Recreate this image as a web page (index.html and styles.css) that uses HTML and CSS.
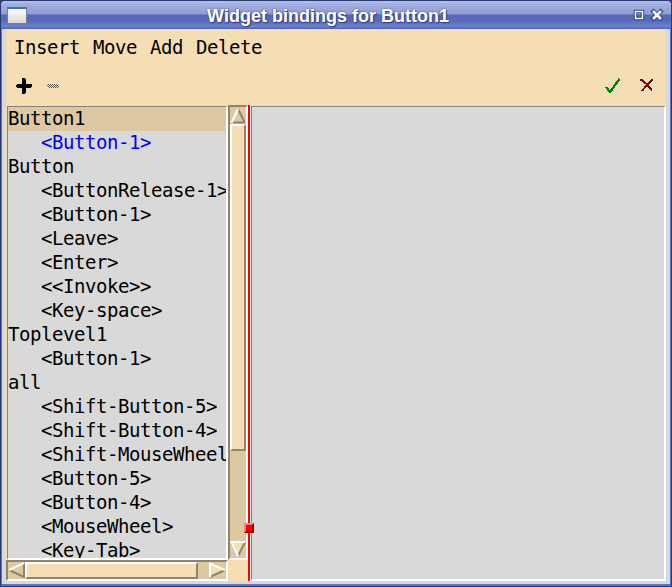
FILE: index.html
```
<!DOCTYPE html>
<html lang="en">
<head>
<meta charset="utf-8">
<title>Widget bindings for Button1</title>
<link rel="stylesheet" href="styles.css">
</head>
<body>
<div class="window">
  <header class="titlebar">
    <span class="app-icon"></span>
    <h1>Widget bindings for Button1</h1>
    <svg class="controls" width="32" height="16" viewBox="0 0 32 16">
      <rect x="3.500" y="3.500" width="7" height="7" fill="none" stroke="#35437f" stroke-width="3.4"/>
      <rect x="3.500" y="3.500" width="7" height="7" fill="none" stroke="#fff" stroke-width="1.4"/>
      <path d="M20 2l10 10M30 2l-10 10" stroke="#35437f" stroke-width="4.5"/>
      <path d="M21 3l8 8M29 3l-8 8" stroke="#fff" stroke-width="2.5"/>
    </svg>
  </header>
  <div class="content">
    <nav class="menu"><span>Insert</span><span>Move</span><span>Add</span><span>Delete</span></nav>
    <div class="toolbar">
      <svg width="16" height="16" viewBox="0 0 16 16" shape-rendering="crispEdges"><path d="M6 0h3v1h1v5h6v3h-1v1h-5v5h-1v1h-3v-6h-5v-1h-1v-2h1v-1h5z" fill="#000"/></svg>
      <svg class="minus" width="12" height="4" viewBox="0 0 12 4" shape-rendering="crispEdges"><path stroke="#555" stroke-dasharray="1 1" d="M1 .5h10M0 1.5h12M1 2.5h11M2 3.5h9"/></svg>
      <span class="spacer"></span>
      <svg class="check" width="16" height="16" viewBox="0 0 16 16" shape-rendering="crispEdges"><path d="M1 9l4 5L14.500 1" fill="none" stroke="#008000" stroke-width="2.300"/></svg>
      <svg class="cross" width="14" height="13" viewBox="0 0 14 13" shape-rendering="crispEdges"><path d="M2 1l11 11M14 1L3 12" stroke="#fff" stroke-width="1.500"/><path d="M0 1h2l5 4.500 5 6M12.500 .5L7 6l-5 6" fill="none" stroke="#800000" stroke-width="1.900"/></svg>
    </div>
    <main class="panes">
      <section class="left">
        <ul class="list">
          <li class="selected">Button1</li>
          <li class="event own">&lt;Button-1&gt;</li>
          <li>Button</li>
          <li class="event">&lt;ButtonRelease-1&gt;</li>
          <li class="event">&lt;Button-1&gt;</li>
          <li class="event">&lt;Leave&gt;</li>
          <li class="event">&lt;Enter&gt;</li>
          <li class="event">&lt;&lt;Invoke&gt;&gt;</li>
          <li class="event">&lt;Key-space&gt;</li>
          <li>Toplevel1</li>
          <li class="event">&lt;Button-1&gt;</li>
          <li>all</li>
          <li class="event">&lt;Shift-Button-5&gt;</li>
          <li class="event">&lt;Shift-Button-4&gt;</li>
          <li class="event">&lt;Shift-MouseWheel&gt;</li>
          <li class="event">&lt;Button-5&gt;</li>
          <li class="event">&lt;Button-4&gt;</li>
          <li class="event">&lt;MouseWheel&gt;</li>
          <li class="event">&lt;Key-Tab&gt;</li>
        </ul>
        <div class="vscroll">
          <svg width="16" height="17" viewBox="0 0 16 17"><path d="M8 2L1 16h14z" fill="#dec8a2"/><path d="M14.5 15L8 2" stroke="#938469" stroke-width="2"/><path d="M1 15.5h14" stroke="#938469" stroke-width="2"/><path d="M1.5 16L8 2" stroke="#fff" stroke-width="2"/></svg>
          <div class="vthumb"></div>
          <span class="spacer"></span>
          <svg width="16" height="17" viewBox="0 0 16 17"><path d="M1 1h14L8 15z" fill="#f5deb3"/><path d="M15 1L8 15" stroke="#938469" stroke-width="2"/><path d="M15 1H1.5L8 15" fill="none" stroke="#fff" stroke-width="2"/></svg>
        </div>
        <div class="hscroll">
          <svg width="17" height="16" viewBox="0 0 17 16"><path d="M1 8L16 1v14z" fill="#dec8a2"/><path d="M1 8l15 7V1" fill="none" stroke="#938469" stroke-width="2"/><path d="M1 8L16 1" stroke="#fff" stroke-width="2"/></svg>
          <div class="hthumb"></div>
          <span class="spacer"></span>
          <svg width="17" height="16" viewBox="0 0 17 16"><path d="M1 1v14l15-7z" fill="#f5deb3"/><path d="M1 15l15-7" stroke="#938469" stroke-width="2"/><path d="M1 15V1.5L16 8" fill="none" stroke="#fff" stroke-width="2"/></svg>
        </div>
      </section>
      <div class="sash"><span class="handle"></span></div>
      <section class="right"></section>
    </main>
  </div>
</div>
</body>
</html>
```

FILE: styles.css
```
* { box-sizing: border-box; }
body { margin: 0; background: #2d3775; }
.window {
  width: 672px; height: 587px;
  display: flex; flex-direction: column;
  border: 1px solid #283672;
  border-radius: 5px 5px 0 0;
  overflow: hidden;
  background: #d9d9d9;
}
.titlebar {
  height: 28px; flex: none;
  display: flex; align-items: center;
  padding: 1px 7px 0 6px;
  background: linear-gradient(#b5c1ec 0, #a3b0df 3px, #8e9dd4 13px, #5469b4 14px, #566cbb 20px, #6f83cd 26px, #5266b5 27px);
}
.app-icon {
  width: 20px; height: 17px;
  border: 1px solid #777d8c; border-top: 2px solid #4675a8;
  background: linear-gradient(#fff, #d8d8d4);
}
h1 {
  flex: 1; margin: 0; text-align: center;
  font: bold 18px/26px "Liberation Sans", sans-serif;
  padding-right: 3px;
  color: #fff; text-shadow: 1px 1px 1px #303f80, 0 0 2px #3c4b90;
}
.controls { flex: none; }
.content {
  flex: 1; min-height: 0;
  display: flex; flex-direction: column;
  border: solid #5b73c8; border-width: 0 1px 2px;
  padding: 0 4px 3px;
  background: linear-gradient(#f5deb3, #f5deb3) content-box, #d9d9d9;
  font: 19px/24px "DejaVu Sans Mono", monospace;
  letter-spacing: -.438px;
  color: #000;
}
.menu { height: 38px; padding: 6px 8px; display: flex; gap: 13px; }
.toolbar { height: 38px; display: flex; align-items: center; padding: 0 12px 0 10px; }
.minus { margin-left: 15px; }
.spacer { flex: 1; }
.cross { margin-left: 19px; margin-top: -2px; }
.panes { flex: 1; min-height: 0; display: flex; }
.left {
  width: 242px; flex: none;
  display: grid; grid-template-columns: 222px 20px; grid-template-rows: 455px 21px;
}
.list {
  margin: 1px 0 0 1px; padding: 0; list-style: none;
  border: solid; border-width: 1px 2px 2px 1px; border-color: #828282 #fff #fff #828282;
  background: #d9d9d9; overflow: hidden; white-space: nowrap;
}
.list li { height: 24px; line-height: 22px; }
.list .selected { background: #dec8a2; }
.list .event { padding-left: 33px; }
.list .own { color: #00f; }
.vscroll, .hscroll {
  display: flex; background: #dcc8a1;
  border: 2px solid; border-color: #938469 #fff #fff #938469;
}
.vscroll { flex-direction: column; }
.vscroll svg, .hscroll svg { flex: none; }
.vthumb, .hthumb { background: #f5deb3; border: 2px solid; border-color: #fff #938469 #938469 #fff; }
.vthumb { height: 327px; }
.hthumb { width: 173px; }
.sash { width: 2px; flex: none; background: #f00; position: relative; }
.handle {
  position: absolute; left: -4px; top: 418px; width: 10px; height: 10px;
  border: 2px solid; border-color: #ff8080 #990000 #990000 #ff8080; background: #f00; z-index: 1;
}
.right {
  flex: 1; margin: 1px 0 0 1px; background: #d9d9d9;
  border: solid; border-width: 1px 2px 2px 1px; border-color: #828282 #fff #fff #828282;
  box-shadow: -1px 0 #fff;
}
```
